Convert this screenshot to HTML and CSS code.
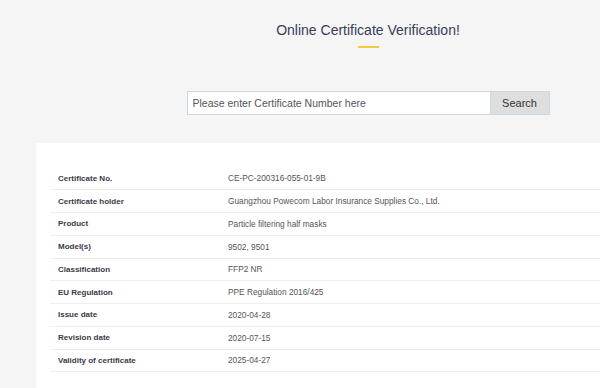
FILE: index.html
```html
<!DOCTYPE html>
<html lang="en">
<head>
    <meta charset="UTF-8">
    <meta name="viewport" content="width=device-width, initial-scale=1.0">
    <title>Online Certificate Verification</title>
    <link rel="stylesheet" href="styles.css">
</head>
<body>
    <div class="page">
        <div class="hero">
            <h1>Online Certificate Verification!</h1>
            <div class="title-bar"></div>
            <form class="search" onsubmit="return false">
                <input type="text" class="search-box" placeholder="Please enter Certificate Number here">
                <button type="submit" class="btn-search">Search</button>
            </form>
        </div>

        <div class="result">
            <table>
                <tbody>
                    <tr><th>Certificate No.</th><td>CE-PC-200316-055-01-9B</td></tr>
                    <tr><th>Certificate holder</th><td>Guangzhou Powecom Labor Insurance Supplies Co., Ltd.</td></tr>
                    <tr><th>Product</th><td>Particle filtering half masks</td></tr>
                    <tr><th>Model(s)</th><td>9502, 9501</td></tr>
                    <tr><th>Classification</th><td>FFP2 NR</td></tr>
                    <tr><th>EU Regulation</th><td>PPE Regulation 2016/425</td></tr>
                    <tr><th>Issue date</th><td>2020-04-28</td></tr>
                    <tr><th>Revision date</th><td>2020-07-15</td></tr>
                    <tr><th>Validity of certificate</th><td>2025-04-27</td></tr>
                </tbody>
            </table>
        </div>
    </div>
</body>
</html>
```

FILE: styles.css
```css
:root {
    --background-color: #f5f5f5;
    --title-color: #383d58;
    --accent-color: #f4c93c;
    --line-color: #efefef;
}

* {
    box-sizing: border-box;
    margin: 0;
    padding: 0;
}

body {
    font-family: 'Liberation Sans', Arial, sans-serif;
    background-color: var(--background-color);
    color: #333;
    overflow: hidden;
}

/* the centred column sits right of the window centre */
.hero {
    padding: 20px 0 0 136px;
    display: flex;
    flex-direction: column;
    align-items: center;
}

.hero h1 {
    font-size: 14px;
    line-height: 20px;
    font-weight: 400;
    color: var(--title-color);
}

.title-bar {
    width: 21px;
    height: 2px;
    margin-top: 6px;
    background-color: var(--accent-color);
}

.search {
    display: flex;
    margin-top: 43px;
    width: 363px;
    height: 24px;
}

.search-box {
    flex: 1;
    height: 100%;
    padding: 0 5px;
    border: 1px solid #c9d8e3;
    border-right: none;
    background-color: white;
    font-family: inherit;
    font-size: 10.5px;
    color: #333;
    outline: none;
}

.search-box::placeholder {
    color: #555;
}

.btn-search {
    width: 60px;
    height: 100%;
    border: 1px solid #c9d8e3;
    background-color: #dedede;
    font-family: inherit;
    font-size: 11px;
    color: #333;
    cursor: pointer;
}

.result {
    margin: 28px 0 0 36px;
    padding: 24px 0 16px 14px;
    background-color: white;
}

table {
    width: 100%;
    border-collapse: collapse;
}

th, td {
    height: 22.75px;
    padding: 0 8px;
    text-align: left;
    font-size: 8px;
    border-bottom: 1px solid var(--line-color);
}

th {
    width: 170px;
    font-weight: 700;
    color: #3a3a45;
}

td {
    font-size: 8.3px;
    color: #555;
}
```
